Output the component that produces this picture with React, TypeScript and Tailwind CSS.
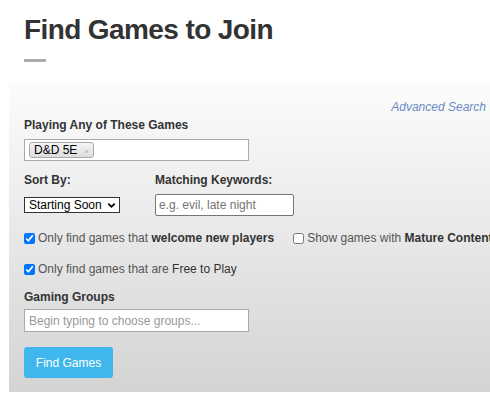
const font = { fontFamily: '"Liberation Sans", Arial, sans-serif' };

function Check({ checked }: { checked?: boolean }) {
    return (
        <input
            type="checkbox"
            defaultChecked={checked}
            className="m-0 h-[11px] w-[11px] shrink-0 accent-[#0075ff]"
        />
    );
}

export default function App() {
    return (
        <div className="w-[490px] h-[399px] overflow-hidden bg-white text-[#333]" style={font}>
            <div className="px-6 pt-[14px]">
                <h1 className="text-[28px] leading-[32px] font-bold tracking-[-0.6px] text-[#333]">Find Games to Join</h1>
                <div className="mt-[13px] h-[3px] w-[22px] bg-[#aaa]"></div>
            </div>

            {/* search panel */}
            <div className="mt-[20px] ml-[9px] w-[492px] bg-gradient-to-b from-[#fcfcfc] to-[#d4d4d4] pl-[15px] pr-[15px] pt-[18px] pb-[14px]">
                <div className="flex justify-end">
                    <a className="text-[12px] leading-[14px] italic text-[#6b8cc4]">Advanced Search</a>
                </div>

                <label className="mt-1 block text-[12px] leading-[14px] font-bold">Playing Any of These Games</label>
                <div className="mt-[7px] flex h-[22px] w-[225px] items-center border border-[#aaa] bg-white px-1">
                    <span className="flex h-[16px] items-center gap-2 rounded-[3px] border border-[#aaa] bg-gradient-to-b from-[#f4f4f4] to-[#ddd] pl-1 pr-[5px] text-[12px] leading-none text-black">
                        D&amp;D 5E
                        <span className="mt-[4px] text-[8px] text-[#888]">&#8250;</span>
                    </span>
                </div>

                <div className="mt-[12px] flex">
                    <div className="w-[131px]">
                        <div className="text-[12px] leading-[14px] font-bold">Sort By:</div>
                        <div className="mt-[7px] flex h-[22px] items-center">
                            <div className="flex h-[16px] w-[96px] items-center justify-between border border-[#333] bg-white pl-1 pr-[3px] text-[12px] leading-none text-black">
                                Starting Soon
                                <svg viewBox="0 0 10 10" className="h-[9px] w-[9px]" fill="none" stroke="#000" strokeWidth="2">
                                    <path d="M1.5 3l3.5 3.5L8.5 3" />
                                </svg>
                            </div>
                        </div>
                    </div>
                    <div>
                        <div className="text-[12px] leading-[14px] font-bold">Matching Keywords:</div>
                        <input
                            placeholder="e.g. evil, late night"
                            className="mt-[7px] block h-[22px] w-[139px] rounded-[2px] border border-[#767676] bg-white px-[3px] text-[12px] placeholder:text-[#757575] outline-none"
                        />
                    </div>
                </div>

                <div className="mt-[15px] flex items-center whitespace-nowrap text-[12px] leading-[14px] text-[#555]">
                    <Check checked />
                    <span className="ml-[3px]">
                        Only find games that <b className="text-[#333]">welcome new players</b>
                    </span>
                    <span className="ml-[19px] flex items-center">
                        <Check />
                        <span className="ml-[3px]">
                            Show games with <b className="text-[#333]">Mature Content</b>
                        </span>
                    </span>
                </div>

                <div className="mt-[17px] flex items-center whitespace-nowrap text-[12px] leading-[14px] text-[#555]">
                    <Check checked />
                    <span className="ml-[3px]">
                        Only find games that are <span className="text-[#333]">Free to Play</span>
                    </span>
                </div>

                <label className="mt-[14px] block text-[12px] leading-[14px] font-bold">Gaming Groups</label>
                <input
                    placeholder="Begin typing to choose groups..."
                    className="mt-[5px] block h-[23px] w-[225px] border border-[#aaa] bg-white px-[4px] text-[12px] placeholder:text-[#999] outline-none"
                />

                <button className="mt-[15px] h-[31px] w-[89px] rounded-[3px] bg-[#3fb7ec] text-[12px] text-white">
                    Find Games
                </button>
            </div>
        </div>
    );
}
